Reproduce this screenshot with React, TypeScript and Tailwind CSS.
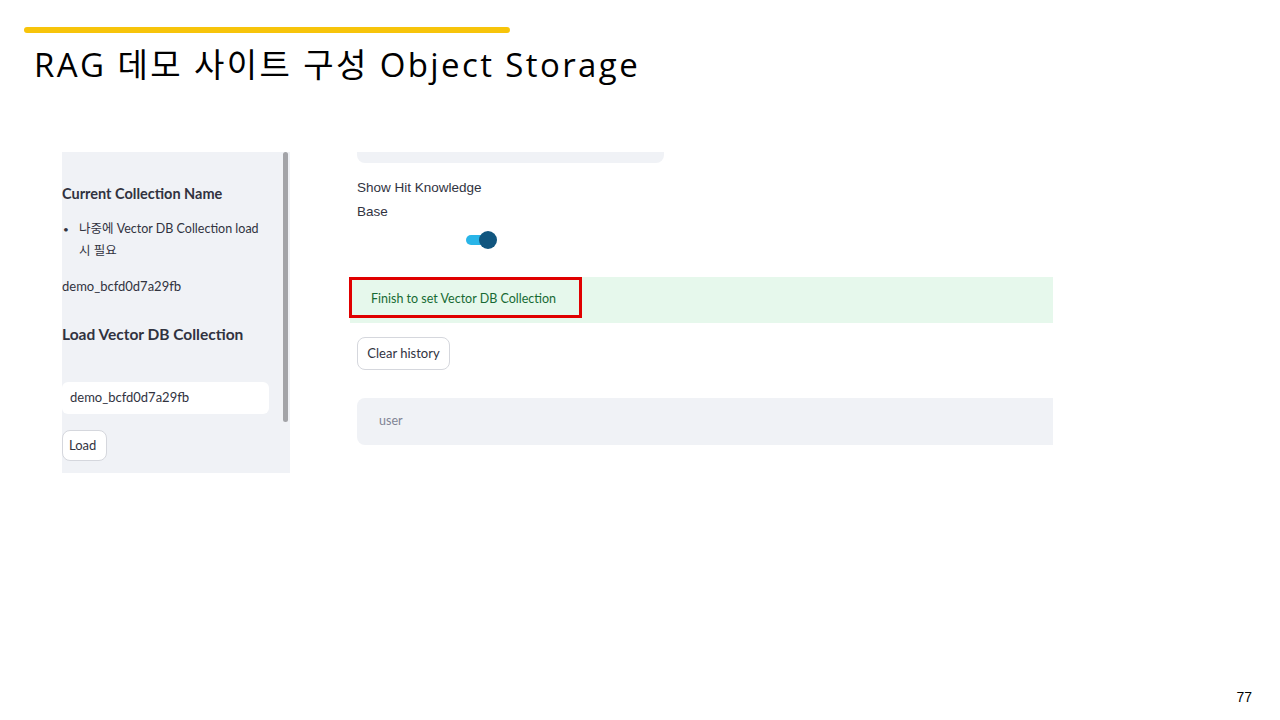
export default function App() {
  const sans = { fontFamily: '"Lato", "Noto Sans CJK KR", sans-serif' };
  return (
    <div className="w-[1280px] h-[720px] bg-white overflow-hidden flex flex-col">
      {/* Slide header */}
      <div className="pt-[27px] pl-[24px]">
        <div className="w-[486px] h-[6px] rounded-full bg-[#f7c40a]" />
        <h1 className="mt-[10px] pl-[10px] text-[33px] leading-[44px] tracking-[2.4px] text-black font-['Open_Sans','Noto_Sans_CJK_KR',sans-serif] font-normal">
          RAG 데모 사이트 구성 Object Storage
        </h1>
      </div>

      {/* Screenshot area */}
      <div className="flex mt-[65px] pl-[62px]">
        {/* Sidebar */}
        <div className="w-[228px] h-[321px] bg-[#f0f2f6] overflow-hidden flex text-[#31333f]" style={sans}>
          <div className="flex-1">
            <div className="mt-[32px] h-[20px] leading-[20px] text-[14.5px] font-bold">Current Collection Name</div>
            <ul className="mt-[14px] text-[12.5px] leading-[22px]">
              <li className="flex">
                <span className="w-[17px] pl-[1px] text-[10px]">•</span>
                <span className="w-[184px]">나중에 Vector DB Collection load 시 필요</span>
              </li>
            </ul>
            <div className="mt-[14px] h-[20px] leading-[20px] text-[13px]">demo_bcfd0d7a29fb</div>
            <div className="mt-[26px] h-[24px] leading-[24px] text-[15.5px] font-bold">Load Vector DB Collection</div>
            <div className="mt-[36px] w-[207px] h-[32px] bg-white rounded-md pl-[8px] flex items-center text-[13px]">
              demo_bcfd0d7a29fb
            </div>
            <button className="mt-[16px] h-[31px] w-[45px] bg-white border border-[#d5d7dd] rounded-lg text-[13px] flex items-center pl-[6px]">
              Load
            </button>
          </div>
          <div className="w-[5px] h-[270px] mr-[2px] rounded-full bg-[#a3a4a8]" />
        </div>

        {/* Main */}
        <div className="ml-[59px] w-[704px] text-[#31333f]">
          <div className="ml-[8px] w-[307px] h-[11px] bg-[#f0f2f6] rounded-b-lg" />
          <div className="ml-[8px] mt-[13px] text-[13.5px] leading-[24px] font-['Liberation_Sans',sans-serif]">
            <div>Show Hit Knowledge</div>
            <div>Base</div>
          </div>
          <div className="ml-[117px] mt-[7px] flex items-center h-[18px]">
            <div className="w-[30px] h-[10px] rounded-full bg-[#29b5e8] flex items-center justify-end">
              <div className="w-[18px] h-[18px] rounded-full bg-[#11567f] mr-[-1px]" />
            </div>
          </div>
          <div className="relative mt-[28px] h-[46px] ml-[1px] bg-[#e6f8ec] flex items-center pl-[21px] text-[12.5px] text-[#176a33]" style={sans}>
            <span className="mt-[-2px]">Finish to set Vector DB Collection</span>
            <div className="absolute left-[-1px] top-0 w-[233px] h-[41px] border-[3px] border-[#e00000]" />
          </div>
          <button
            className="ml-[8px] mt-[14px] h-[33px] w-[93px] bg-white border border-[#d5d7dd] rounded-lg text-[13px] flex items-center justify-center"
            style={sans}
          >
            Clear history
          </button>
          <div
            className="ml-[8px] mt-[28px] h-[47px] bg-[#f0f2f6] rounded-l-lg flex items-center pl-[22px] text-[12.5px] text-[#808495]"
            style={sans}
          >
            user
          </div>
        </div>
      </div>

      {/* Page number */}
      <div className="mt-auto mb-[12px] pr-[28px] text-right text-[14px] text-black font-['Liberation_Sans',sans-serif]">
        77
      </div>
    </div>
  );
}
